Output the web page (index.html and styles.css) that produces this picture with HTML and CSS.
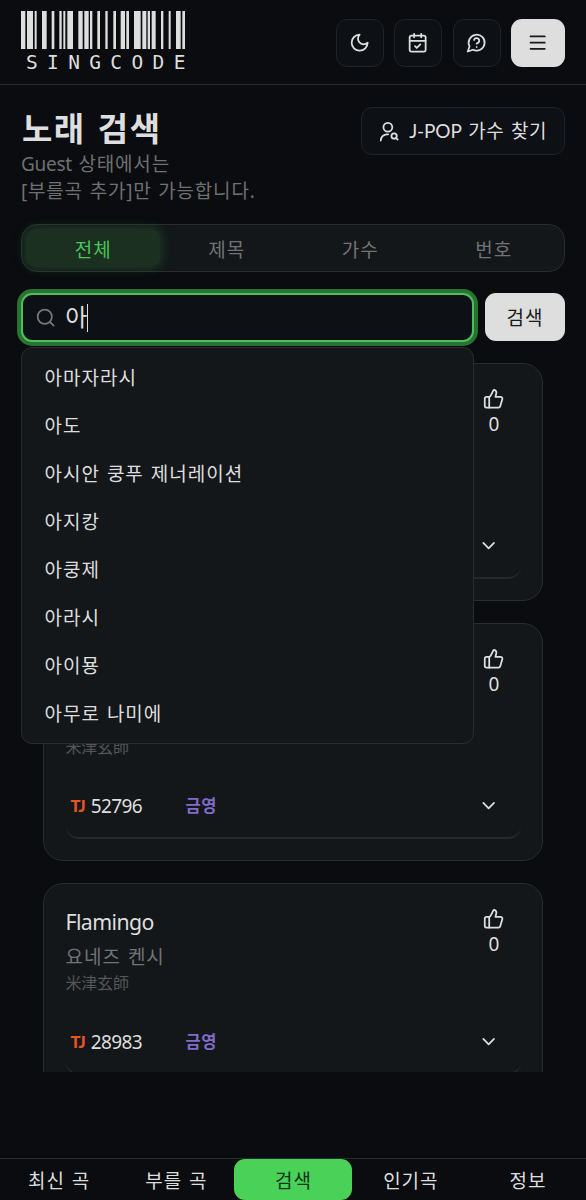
FILE: index.html
```html
<!DOCTYPE html>
<html lang="ko">
<head>
<meta charset="utf-8">
<title>SINGCODE</title>
<link rel="stylesheet" href="styles.css">
</head>
<body>
<svg class="defs" width="0" height="0">
  <symbol id="thumb" viewBox="0 0 24 24"><path d="M7 10v12"/><path d="M15 5.88 14 10h5.83a2 2 0 0 1 1.92 2.56l-2.33 8A2 2 0 0 1 17.5 22H4a2 2 0 0 1-2-2v-8a2 2 0 0 1 2-2h2.76a2 2 0 0 0 1.79-1.11L12 2a3.13 3.13 0 0 1 3 3.88Z"/></symbol>
  <symbol id="chevron" viewBox="0 0 24 24"><path d="m6 9 6 6 6-6"/></symbol>
</svg>
<header class="header">
  <div class="logo">
    <svg class="barcode" viewBox="63 33 492 114" preserveAspectRatio="none"><path d="M63 33h13v114h-13zM81 33h18v114h-18zM104 33h6v114h-6zM126 33h14v114h-14zM155 33h8v114h-8zM178 33h7v114h-7zM190 33h6v114h-6zM202 33h17v114h-17zM235 33h13v114h-13zM253 33h13v114h-13zM270 33h7v114h-7zM292 33h8v114h-8zM316 33h7v114h-7zM340 33h8v114h-8zM362 33h13v114h-13zM379 33h8v114h-8zM402 33h20v114h-20zM427 33h12v114h-12zM443 33h7v114h-7zM455 33h12v114h-12zM483 33h7v114h-7zM506 33h6v114h-6zM528 33h14v114h-14zM547 33h8v114h-8z"/></svg>
    <div class="logo-text">SINGCODE</div>
  </div>
  <div class="actions">
    <button class="icon-btn"><svg class="icon" viewBox="0 0 24 24"><path d="M12 3a6 6 0 0 0 9 9 9 9 0 1 1-9-9Z"/></svg></button>
    <button class="icon-btn"><svg class="icon" viewBox="0 0 24 24"><path d="M8 2v4M16 2v4"/><rect width="18" height="18" x="3" y="4" rx="2"/><path d="M3 10h18M9 16l2 2 4-4"/></svg></button>
    <button class="icon-btn"><svg class="icon" viewBox="0 0 24 24"><path d="M7.9 20A9 9 0 1 0 4 16.1L2 22Z"/><path d="M9.09 9a3 3 0 0 1 5.83 1c0 2-3 3-3 3M12 17h.01"/></svg></button>
    <button class="icon-btn menu"><svg class="icon" viewBox="0 0 24 24"><path d="M4 5h16M4 12h16M4 19h16"/></svg></button>
  </div>
</header>
<main class="main">
  <div class="heading">
    <div>
      <h1 class="title">노래 검색</h1>
      <p class="subtitle"><span class="latin">Guest</span> 상태에서는<br>[부를곡 추가]만 가능합니다.</p>
    </div>
    <button class="artist-btn"><svg class="icon" viewBox="0 0 24 24"><circle cx="10" cy="7" r="5"/><path d="M10.3 15H9a7 7 0 0 0-7 7"/><circle cx="17" cy="17" r="3"/><path d="m21 21-1.9-1.9"/></svg><span><span class="jpop">J-POP</span> 가수 찾기</span></button>
  </div>
  <div class="tabs">
    <div class="tab active">전체</div><div class="tab">제목</div><div class="tab">가수</div><div class="tab">번호</div>
  </div>
  <div class="search">
    <div class="field">
      <svg class="icon" viewBox="0 0 24 24"><circle cx="11" cy="11" r="8"/><path d="m21 21-4.3-4.3"/></svg>
      <span class="query">아</span><span class="caret"></span>
      <ul class="suggestions">
        <li>아마자라시</li><li>아도</li><li>아시안 쿵푸 제너레이션</li><li>아지캉</li><li>아쿵제</li><li>아라시</li><li>아이묭</li><li>아무로 나미에</li>
      </ul>
    </div>
    <button class="search-btn">검색</button>
  </div>
  <div class="results">
    <article class="card tall">
      <div class="info"></div>
      <div class="like"><svg class="icon"><use href="#thumb"/></svg><span>0</span></div>
      <div class="codes"><svg class="icon chevron"><use href="#chevron"/></svg></div>
    </article>
    <article class="card tall">
      <div class="info"><div class="origin">米津玄師</div></div>
      <div class="like"><svg class="icon"><use href="#thumb"/></svg><span>0</span></div>
      <div class="codes"><div class="code"><b class="tj">TJ</b><span>52796</span></div><b class="ky">금영</b><svg class="icon chevron"><use href="#chevron"/></svg></div>
    </article>
    <article class="card">
      <div class="info"><div class="song">Flamingo</div><div class="artist">요네즈 켄시</div><div class="origin">米津玄師</div></div>
      <div class="like"><svg class="icon"><use href="#thumb"/></svg><span>0</span></div>
      <div class="codes"><div class="code"><b class="tj">TJ</b><span>28983</span></div><b class="ky">금영</b><svg class="icon chevron"><use href="#chevron"/></svg></div>
    </article>
  </div>
</main>
<nav class="nav">
  <div class="nav-item">최신 곡</div><div class="nav-item">부를 곡</div><div class="nav-item current">검색</div><div class="nav-item">인기곡</div><div class="nav-item">정보</div>
</nav>
</body>
</html>
```
FILE: styles.css
```css
* { box-sizing: border-box; margin: 0; padding: 0; }
body {
  width: 586px; height: 1200px; overflow: hidden;
  display: flex; flex-direction: column;
  background: #0a0c0f; color: #dedede;
  font-family: "Noto Sans", "Noto Sans CJK KR", sans-serif;
  font-size: 19px; line-height: 26.7px; font-weight: 400;
  letter-spacing: 1px; word-spacing: 1px;
}
button { font: inherit; color: inherit; letter-spacing: inherit; word-spacing: inherit; border: 0; }
.defs { display: none; }
.icon { width: 21.3px; height: 21.3px; flex: none; fill: none; stroke: currentColor; stroke-width: 2; stroke-linecap: round; stroke-linejoin: round; }

.header { height: 85px; flex: none; display: flex; justify-content: space-between; align-items: center; padding: 2px 21px 0; border-bottom: 1px solid #292b2e; }
.logo { width: 164px; height: 64px; }
.barcode { display: block; width: 164px; height: 38px; fill: #dedede; }
.logo-text { font: 19.5px/24px "DejaVu Sans Mono", monospace; letter-spacing: 9.35px; padding: 2px 0 0 5px; white-space: nowrap; }
.actions { display: flex; gap: 10.5px; }
.icon-btn { width: 48px; height: 48px; display: flex; align-items: center; justify-content: center; background: #0d1015; border: 1px solid #202326; border-radius: 11px; }
.icon-btn.menu { width: 54px; background: #dedede; border: 0; color: #17191b; }

.main { flex: 1; min-height: 0; padding: 22px 21px 0; }
.heading { height: 117px; display: flex; justify-content: space-between; align-items: flex-start; }
.title { padding-left: 1px; font-size: 33px; line-height: 44px; font-weight: 700; letter-spacing: 1.5px; word-spacing: 2px; }
.subtitle { color: #6f7072; letter-spacing: .8px; }
.latin { letter-spacing: -.3px; }
.artist-btn { width: 204px; height: 48px; display: flex; align-items: center; justify-content: center; gap: 9px; padding-top: 1px; background: #0d1015; border: 1px solid #202326; border-radius: 11px; letter-spacing: .6px; white-space: nowrap; }
.jpop { font-family: Lato, sans-serif; font-size: 19px; letter-spacing: -.1px; }

.tabs { height: 48px; display: grid; grid-template-columns: repeat(4, 1fr); padding: 4px; background: #13171a; border: 1px solid #292c2f; border-radius: 16px; }
.tab { display: flex; align-items: center; justify-content: center; padding: 4px 0 0 1px; color: #717375; border-radius: 10px; }
.tab.active { color: #4ac65a; background: #1b3020; box-shadow: 0 0 11px 2px rgba(60, 170, 75, .24); }

.search { display: flex; gap: 11px; margin-top: 21px; height: 49px; }
.field { position: relative; width: 453px; display: flex; align-items: center; padding-left: 12px; background: #0d1015; border: 2px solid #50bd5f; border-radius: 11px; box-shadow: 0 0 0 4px #267430; }
.field > .icon { color: #75777a; }
.query { font-size: 24px; margin-left: 9px; letter-spacing: 0; }
.caret { width: 1px; height: 28px; background: #dedede; }
.suggestions { position: absolute; z-index: 2; left: -2px; top: 52px; width: 453px; height: 397px; padding: 6px 5px; list-style: none; background: #13171a; border: 1px solid #292c2f; border-radius: 11px; }
.suggestions li { height: 48px; display: flex; align-items: center; padding: 1px 0 0 17.5px; }
.search-btn { width: 80px; height: 48px; padding-top: 2px; background: #dedede; color: #17191b; border-radius: 11px; }

.results { height: 709px; margin-top: 21px; padding: 0 22px; overflow: hidden; display: flex; flex-direction: column; gap: 22px; }
.card { flex: none; height: 214px; padding: 22px 21px 0 21.5px; display: grid; grid-template-columns: 1fr 56px; grid-template-rows: 111px 57px; background: #13171a; border: 1px solid #292c2f; border-radius: 20px; }
.card.tall { height: 238px; grid-template-rows: 135px 57px; }
.tall .origin { margin-top: 90px; }
.song { font-size: 21.3px; line-height: 32px; letter-spacing: -.6px; }
.artist { margin-top: 5px; line-height: 28px; color: #717375; }
.origin { font-size: 16px; line-height: 22px; margin-top: 1px; letter-spacing: -.2px; color: #545659; }
.like { display: flex; flex-direction: column; align-items: center; padding: 2px 0 0 2px; letter-spacing: 0; }
.like span { margin-top: 2px; }
.codes { grid-column: 1 / 3; height: 58px; display: flex; align-items: center; padding: 0 21.5px 5px 5px; border-bottom: 2px solid #25292c; border-radius: 0 0 13px 13px; letter-spacing: 0; }
.code { width: 115px; display: flex; align-items: center; gap: 6px; }
.code span { letter-spacing: -.65px; }
.tj { color: #e95420; font-family: Lato, sans-serif; font-size: 16.5px; font-weight: 900; letter-spacing: -.9px; }
.ky { color: #806cc8; font-size: 16.5px; letter-spacing: .6px; }
.chevron { margin: -2px 0 0 auto; }

.nav { height: 42px; flex: none; display: grid; grid-template-columns: repeat(5, 1fr); border-top: 1px solid #292b2e; letter-spacing: .9px; }
.nav-item { display: flex; align-items: center; justify-content: center; padding: 4px 0 0 1px; }
.current { background: #49d158; color: #10351a; border-radius: 11px; }
```
